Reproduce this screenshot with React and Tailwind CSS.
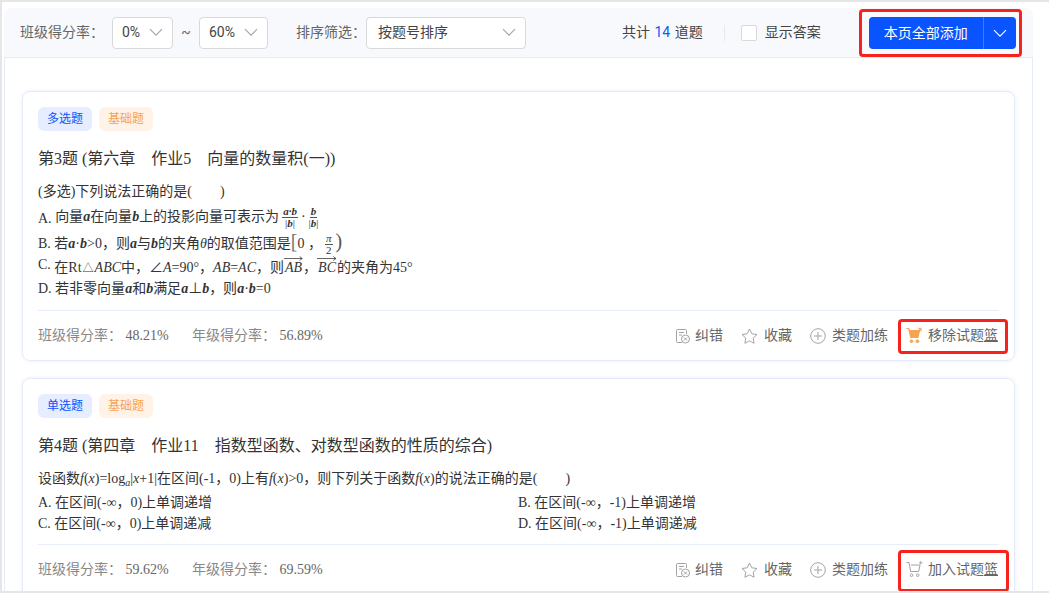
import React from "react";

const CJK = '"Noto Sans CJK SC"';
const Chevron = ({ c = "#a3a3a3", w = 14 }) => (
  <svg width={w} height={w * 0.6} viewBox="0 0 14 8" fill="none" stroke={c} strokeWidth="1.1"><path d="M1 1l6 6 6-6" /></svg>
);

const Select = ({ text, w, gap }) => (
  <div className="flex items-center justify-between h-[32px] bg-white border border-[#d9d9d9] rounded-[4px] text-[#444] shrink-0" style={{ width: w, paddingLeft: gap, paddingRight: 9 }}>
    <span>{text}</span><Chevron />
  </div>
);

const I = ({ children }) => <i className="italic">{children}</i>;
const B = ({ children }) => <b className="italic font-bold">{children}</b>;
const Frac = ({ a, b }) => (
  <span className="inline-flex flex-col items-center align-middle text-[11px] leading-[11px] mx-[3px]">
    <span className="border-b border-[#555] px-[1px]">{a}</span>
    <span>{b}</span>
  </span>
);
const Vec = ({ children }) => (
  <span className="relative inline-block px-[1px]">
    <span className="absolute left-0 right-0 top-[-1px] h-[5px]">
      <svg className="w-full h-full" viewBox="0 0 22 5" preserveAspectRatio="none" fill="none" stroke="#333" strokeWidth="0.8"><path d="M0 2.5h21M18 0.5l3 2-3 2" /></svg>
    </span>
    <I>{children}</I>
  </span>
);

const Tag = ({ text, cls }) => (
  <span className={`flex items-center justify-center w-[54px] h-[24px] rounded-[6px] text-[12px] ${cls}`}>{text}</span>
);

const CartFull = () => (
  <svg width="17" height="17" viewBox="0 0 17 17">
    <path d="M0.5 1.5h2.5l.6 2h10l-1.600 7H4.600L3 2.800" fill="#f7a254" stroke="#f7a254" strokeWidth="1" />
    <circle cx="5.5" cy="14.200" r="1.700" fill="#f7a254" /><circle cx="11.5" cy="14.200" r="1.700" fill="#f7a254" />
    <path d="M12.500.8l3.200 3.200M15.700.8l-3.200 3.200" stroke="#f7a254" strokeWidth="1.100" />
  </svg>
);
const CartEmpty = () => (
  <svg width="17" height="17" viewBox="0 0 17 17" fill="none" stroke="#a3a3a3" strokeWidth="1">
    <path d="M0.500 1.500h2.500l1.700 9h8l1.300-6.500H5" />
    <circle cx="5.500" cy="14.200" r="1.300" /><circle cx="11.700" cy="14.200" r="1.300" />
    <path d="M13 1.800h3.400M14.700.2v3.200" />
  </svg>
);

const Actions = ({ basket, icon, boxCls }) => (
  <div className="flex items-center text-[14px] leading-[20px] text-[#666] mr-[1px]">
    <span className="flex items-center gap-[4px] mr-[18px]">
      <svg width="16" height="16" viewBox="0 0 16 16" fill="none" stroke="#a3a3a3" strokeWidth="1">
        <path d="M7 14.500H2.500a1 1 0 0 1-1-1v-11a1 1 0 0 1 1-1h8a1 1 0 0 1 1 1V6" /><path d="M4 4.500h5M4 7h3" />
        <circle cx="10.500" cy="11" r="4" /><path d="M9 9.500l3 3M12 9.500l-3 3" />
      </svg>
      纠错
    </span>
    <span className="flex items-center gap-[6px] mr-[18px]">
      <svg width="17" height="16" viewBox="0 0 17 16" fill="none" stroke="#a3a3a3" strokeWidth="1"><path d="M8.500 1l2.300 4.800 5.200.7-3.800 3.600.9 5.200-4.600-2.500-4.600 2.500.9-5.200L1 6.500l5.200-.7z" /></svg>
      收藏
    </span>
    <span className="flex items-center gap-[6px] mr-[18px]">
      <svg width="16" height="16" viewBox="0 0 16 16" fill="none" stroke="#a3a3a3" strokeWidth="1"><circle cx="8" cy="8" r="7.300" /><path d="M4 8h8M8 4v8" /></svg>
      类题加练
    </span>
    <span className="relative flex items-center gap-[5px]">
      <span className={`absolute border-[3px] border-[#f5231b] rounded-[4px] ${boxCls}`} />
      {icon}
      <span>{basket}<span className="underline">篮</span></span>
    </span>
  </div>
);

const Footer = ({ cls, grade, basket, icon, boxCls }) => (
  <div className="flex items-center justify-between border-t border-[#e8edfb] h-[50px] text-[14px] text-[#888]">
    <div className="flex">
      <span className="w-[154px]">班级得分率： <span className="text-[#666]">{cls}</span></span>
      <span>年级得分率： <span className="text-[#666]">{grade}</span></span>
    </div>
    <Actions basket={basket} icon={icon} boxCls={boxCls} />
  </div>
);

const sans = { fontFamily: `Roboto, ${CJK}, sans-serif` };
const line = "h-[22px] whitespace-nowrap";

export default function App() {
  return (
    <div className="w-[1049px] h-[593px] overflow-hidden bg-white border-t-2 border-l-2 border-b-2 border-[#e6e6e6] pt-[6px] pl-[2px] pr-[16px] flex flex-col" style={{ fontFamily: `"Liberation Serif", ${CJK}, serif` }}>
      <header className="flex items-center shrink-0 h-[49px] bg-[#f8f9fd] rounded-t-[8px] pl-[16px] text-[14px] text-[#666]" style={sans}>
        <span className="w-[92px] shrink-0">班级得分率：</span>
        <Select text="0%" w={61} gap={9} />
        <span className="w-[26px] text-center">~</span>
        <Select text="60%" w={69} gap={9} />
        <span className="ml-[28px] w-[70px] shrink-0">排序筛选：</span>
        <Select text="按题号排序" w={160} gap={11} />
        <span className="ml-[96px] text-[#444]">共计 <span className="text-[#0a5cf5] mx-[1px]">14</span> 道题</span>
        <span className="w-px h-[16px] bg-[#e3e8f5] ml-[21px]" />
        <span className="w-[16px] h-[16px] bg-white border border-[#d9d9d9] rounded-[2px] ml-[16px]" />
        <span className="ml-[8px] text-[#444]">显示答案</span>
        <div className="ml-[38px] w-[163px] h-[48px] mt-[1px] border-[3px] border-[#f5231b] rounded-[4px] flex items-center justify-end pr-[3px]">
          <div className="flex w-[147px] h-[32px] rounded-[4px] bg-[#0a54ff] text-white">
            <span className="w-[115px] flex items-center justify-center border-r border-[#3f7bff]">本页全部添加</span>
            <span className="flex-1 flex items-center justify-center"><Chevron c="#fff" /></span>
          </div>
        </div>
      </header>

      <main className="flex-1 min-h-0 border-x border-t border-[#e6ebf8] px-[17px] pt-[33px]">
        <section className="h-[270px] border border-[#e4eafb] rounded-[8px] px-[15px] pt-[15px] shadow-[0_0_4px_rgba(220,228,250,0.6)] flex flex-col">
          <div className="flex gap-[7px]" style={sans}>
            <Tag text="多选题" cls="bg-[#e6edff] text-[#0a54ff]" />
            <Tag text="基础题" cls="bg-[#fff2e6] text-[#f7a254]" />
          </div>
          <h2 className="mt-[16px] text-[16px] leading-[24px] font-normal text-[#333]">第3题 (第六章&nbsp;&nbsp;&nbsp;&nbsp;作业5&nbsp;&nbsp;&nbsp;&nbsp;向量的数量积(一))</h2>
          <div className="mt-[10px] text-[14px] leading-[22px] text-[#333] flex-1">
            <div className={line}>(多选)下列说法正确的是(&nbsp;&nbsp;&nbsp;&nbsp;&nbsp;&nbsp;&nbsp;&nbsp;)</div>
            <div className={`${line} mt-[3px]`}><span className="align-[-2px]">A.</span> 向量<B>a</B>在向量<B>b</B>上的投影向量可表示为<Frac a={<B>a·b</B>} b={<>|<B>b</B>|</>} />·<Frac a={<B>b</B>} b={<>|<B>b</B>|</>} /></div>
            <div className={`${line} mt-[2px]`}>B. 若<B>a</B>·<B>b</B>&gt;0，则<B>a</B>与<B>b</B>的夹角<I>θ</I>的取值范围是<span className="text-[20px] font-light text-[#777]">[</span>0 ，<Frac a={<I>π</I>} b="2" /><span className="text-[20px] font-light text-[#555]">)</span></div>
            <div className={`${line} mt-[2px]`}><span className="align-[3px]">C.</span> 在Rt<span className="text-[11px] mx-[1px]">△</span><I>ABC</I>中，∠<I>A</I>=90°，<I>AB</I>=<I>AC</I>，则<Vec>AB</Vec>，<Vec>BC</Vec>的夹角为45°</div>
            <div className={`${line} mt-[2px]`}>D. 若非零向量<B>a</B>和<B>b</B>满足<B>a</B>⊥<B>b</B>，则<B>a</B>·<B>b</B>=0</div>
          </div>
          <Footer cls="48.21%" grade="56.89%" basket="移除试题" icon={<CartFull />} boxCls="left-[-8px] right-[-10px] top-[-7px] bottom-[-8px]" />
        </section>

        <section className="mt-[17px] h-[240px] border border-[#e4eafb] rounded-t-[8px] px-[15px] pt-[15px] shadow-[0_0_4px_rgba(220,228,250,0.6)] flex flex-col">
          <div className="flex gap-[7px]" style={sans}>
            <Tag text="单选题" cls="bg-[#e6edff] text-[#0a54ff]" />
            <Tag text="基础题" cls="bg-[#fff2e6] text-[#f7a254]" />
          </div>
          <h2 className="mt-[16px] text-[16px] leading-[24px] font-normal text-[#333]">第4题 (第四章&nbsp;&nbsp;&nbsp;&nbsp;作业11&nbsp;&nbsp;&nbsp;&nbsp;指数型函数、对数型函数的性质的综合)</h2>
          <div className="mt-[10px] text-[14px] text-[#333]">
            <div className={line + " leading-[22px]"}>设函数<I>f</I>(<I>x</I>)=log<sub className="italic text-[10px]">a</sub>|<I>x</I>+1|在区间(-1，0)上有<I>f</I>(<I>x</I>)&gt;0，则下列关于函数<I>f</I>(<I>x</I>)的说法正确的是(&nbsp;&nbsp;&nbsp;&nbsp;&nbsp;&nbsp;&nbsp;&nbsp;)</div>
            <div className="grid grid-cols-[480px_1fr] leading-[21px] mt-[2px]">
              <div>A. 在区间(-∞，0)上单调递增</div>
              <div>B. 在区间(-∞，-1)上单调递增</div>
              <div>C. 在区间(-∞，0)上单调递减</div>
              <div>D. 在区间(-∞，-1)上单调递减</div>
            </div>
          </div>
          <div className="mt-[10px]"><Footer cls="59.62%" grade="69.59%" basket="加入试题" icon={<CartEmpty />} boxCls="left-[-8px] right-[-11px] top-[-10px] bottom-[-12px]" /></div>
        </section>
      </main>
    </div>
  );
}
